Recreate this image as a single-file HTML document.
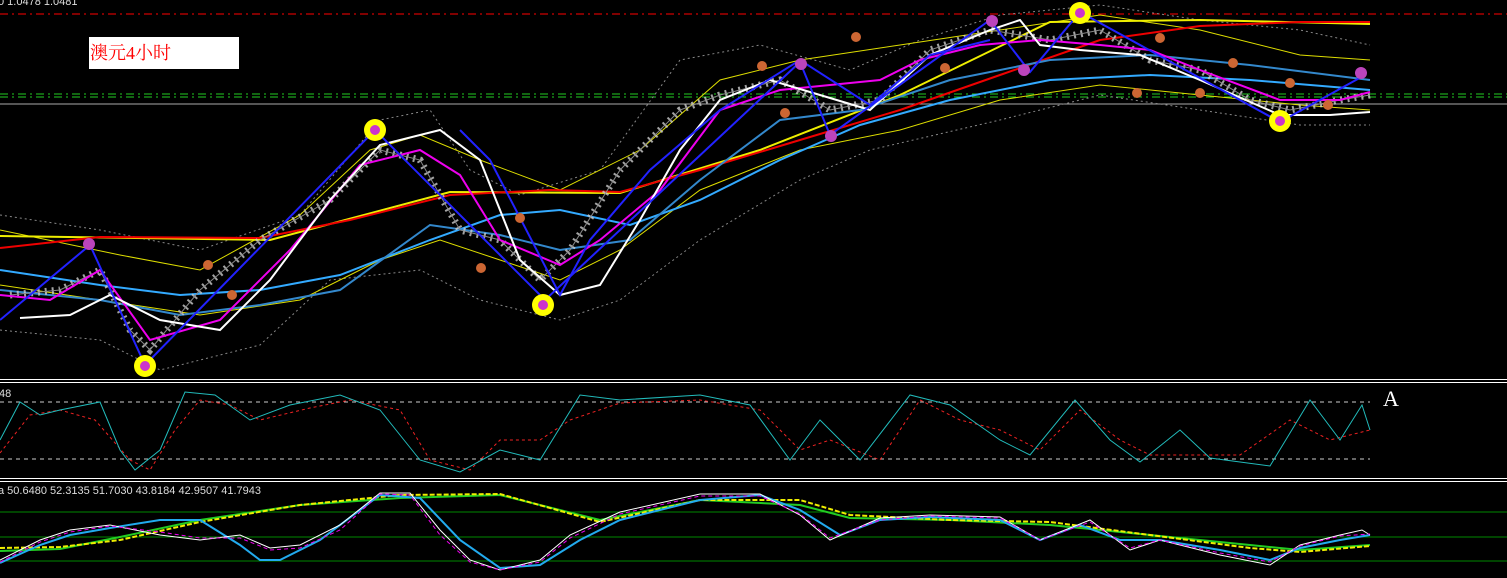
<!DOCTYPE html>
<html><head><meta charset="utf-8"><style>
html,body{margin:0;padding:0;background:#000;width:1507px;height:578px;overflow:hidden}
svg{display:block}
</style></head><body>
<svg width="1507" height="578" viewBox="0 0 1507 578" xmlns="http://www.w3.org/2000/svg" style="font-family:'Liberation Sans',sans-serif">
<rect width="1507" height="578" fill="#000"/>
<text x="-2" y="5" fill="#ddd" font-size="11">0 1.0478 1.0481</text>
<line x1="0" y1="14" x2="1507" y2="14" stroke="#f00" stroke-dasharray="8,4,2,4"/>
<line x1="0" y1="94" x2="1507" y2="94" stroke="#2c2" stroke-dasharray="8,4,2,4"/>
<line x1="0" y1="97" x2="1507" y2="97" stroke="#2c2" stroke-dasharray="8,4,2,4"/>
<line x1="0" y1="104" x2="1507" y2="104" stroke="#aaa"/>
<rect x="89" y="37" width="150" height="32" fill="#fff"/>
<text x="90" y="59" fill="#f00" style="font-size:18px;font-family:'Liberation Serif','Noto Serif CJK SC',serif">澳元4小时</text>
<!-- bands -->
<polyline fill="none" stroke="#888" stroke-dasharray="2,3" points="0,215 100,230 200,250 300,215 380,120 430,110 470,170 520,195 600,170 680,60 760,45 850,70 920,40 1000,15 1100,5 1200,20 1300,30 1370,45"/>
<polyline fill="none" stroke="#888" stroke-dasharray="2,3" points="0,330 100,340 160,370 260,345 330,280 420,270 480,300 560,320 620,300 700,240 800,180 870,150 1000,120 1100,95 1200,110 1300,125 1370,125"/>
<polyline fill="none" stroke="#dd0" points="0,285 100,300 200,315 300,300 380,260 440,240 500,260 560,280 620,250 700,190 800,150 900,130 1000,100 1100,85 1200,95 1300,105 1370,110"/>
<polyline fill="none" stroke="#dd0" points="0,230 120,255 200,270 300,215 370,150 420,135 480,160 560,190 640,150 720,80 800,60 900,45 1000,30 1100,15 1200,30 1300,55 1370,60"/>
<polyline fill="none" stroke="#ee0" stroke-width="2" points="0,236 270,240 450,192 620,193 760,150 900,95 1050,22 1200,20 1370,24"/>
<polyline fill="none" stroke="#e00" stroke-width="2" points="0,248 100,237 260,238 350,220 450,195 550,190 620,192 700,170 800,140 900,110 1000,75 1100,40 1200,26 1300,22 1370,22"/>
<polyline fill="none" stroke="#3af" stroke-width="2" points="0,270 100,285 180,295 260,290 340,275 430,240 500,215 560,210 630,225 700,200 780,160 860,125 950,100 1050,80 1150,75 1250,80 1370,90"/>
<polyline fill="none" stroke="#38c" stroke-width="2" points="0,290 100,300 180,315 260,305 340,290 430,225 500,235 560,250 630,240 700,180 780,120 860,110 950,80 1050,60 1150,55 1250,65 1370,80"/>
<!-- candles texture -->
<polyline fill="none" stroke="#ccc" stroke-width="7" stroke-dasharray="2,5" opacity="0.8" points="10,295 60,290 100,270 130,330 150,350 200,290 260,240 330,200 380,150 420,160 460,230 500,240 540,280 570,250 620,170 680,110 720,95 780,80 830,110 880,100 930,50 990,30 1050,40 1100,30 1150,60 1200,70 1250,100 1290,110 1340,100 1370,95"/>
<polyline fill="none" stroke="#888" points="10,295 60,290 100,270 130,330 150,350 200,290 260,240 330,200 380,150 420,160 460,230 500,240 540,280 570,250 620,170 680,110 720,95 780,80 830,110 880,100 930,50 990,30 1050,40 1100,30 1150,60 1200,70 1250,100 1290,110 1340,100 1370,95"/>
<polyline fill="none" stroke="#e0e" stroke-width="2" points="0,295 50,300 100,270 150,340 220,320 290,250 360,165 420,150 460,175 500,240 560,265 600,240 660,190 720,110 780,90 830,85 880,80 920,60 980,45 1040,40 1100,45 1150,50 1200,70 1280,100 1340,100 1370,92"/>
<polyline fill="none" stroke="#fff" stroke-width="2" points="20,318 70,315 110,295 160,320 220,330 270,280 330,200 380,145 440,130 480,160 520,260 560,295 600,285 640,220 680,150 720,100 770,80 820,95 870,110 930,55 990,30 1020,20 1040,45 1080,50 1140,55 1200,80 1280,115 1330,115 1370,112"/>
<polyline fill="none" stroke="#22f" stroke-width="2" points="0,320 90,245 145,365 375,130 545,300 800,62 830,135 990,20 1030,72 1080,12 1280,122 1365,75"/>
<polyline fill="none" stroke="#22f" stroke-width="2" points="460,130 490,160 560,295 590,240 650,170 720,110 800,60 870,105 930,55 990,40"/>
<g fill="#ff0"><circle cx="145" cy="366" r="11"/><circle cx="375" cy="130" r="11"/><circle cx="543" cy="305" r="11"/><circle cx="1080" cy="13" r="11"/><circle cx="1280" cy="121" r="11"/></g>
<g fill="#c3c"><circle cx="145" cy="366" r="5"/><circle cx="375" cy="130" r="5"/><circle cx="543" cy="305" r="5"/><circle cx="1080" cy="13" r="5"/><circle cx="1280" cy="121" r="5"/></g>
<g fill="#b4b"><circle cx="89" cy="244" r="6"/><circle cx="801" cy="64" r="6"/><circle cx="992" cy="21" r="6"/><circle cx="1361" cy="73" r="6"/><circle cx="1024" cy="70" r="6"/><circle cx="831" cy="136" r="6"/></g>
<g fill="#c63"><circle cx="208" cy="265" r="5"/><circle cx="232" cy="295" r="5"/><circle cx="520" cy="218" r="5"/><circle cx="481" cy="268" r="5"/><circle cx="856" cy="37" r="5"/><circle cx="762" cy="66" r="5"/><circle cx="945" cy="68" r="5"/><circle cx="1160" cy="38" r="5"/><circle cx="1137" cy="93" r="5"/><circle cx="1200" cy="93" r="5"/><circle cx="1233" cy="63" r="5"/><circle cx="1290" cy="83" r="5"/><circle cx="1328" cy="105" r="5"/><circle cx="785" cy="113" r="5"/></g>
<!-- separators -->
<line x1="0" y1="379.5" x2="1507" y2="379.5" stroke="#fff"/><line x1="0" y1="382.5" x2="1507" y2="382.5" stroke="#fff"/>
<line x1="0" y1="478.5" x2="1507" y2="478.5" stroke="#fff"/><line x1="0" y1="481.5" x2="1507" y2="481.5" stroke="#fff"/>
<text x="-1" y="397" fill="#ddd" font-size="11">48</text>
<text x="1383" y="406" fill="#fff" style="font-size:22px;font-family:'Liberation Serif',serif">A</text>
<line x1="0" y1="402" x2="1370" y2="402" stroke="#ccc" stroke-dasharray="4,4"/>
<line x1="0" y1="459" x2="1370" y2="459" stroke="#ccc" stroke-dasharray="4,4"/>
<polyline fill="none" stroke="#e22" stroke-dasharray="3,3" points="0,453 30,415 60,410 95,420 130,460 150,470 175,430 200,400 230,405 260,420 310,408 350,400 400,410 430,460 470,470 500,440 540,440 570,420 620,403 700,400 760,410 800,450 830,440 880,460 920,400 960,420 1000,430 1040,450 1080,410 1120,440 1150,455 1200,455 1240,455 1290,420 1330,440 1370,430"/>
<polyline fill="none" stroke="#2bb" points="0,440 20,402 40,415 60,410 100,402 120,450 135,470 160,450 185,392 215,395 250,420 290,405 340,395 380,410 420,460 460,472 500,450 540,460 580,395 620,400 700,395 750,405 790,460 820,420 860,460 910,395 950,405 1000,440 1030,455 1075,400 1110,440 1140,462 1180,430 1210,458 1270,466 1310,400 1340,440 1362,405 1370,430"/>
<text x="-2" y="494" fill="#ddd" font-size="11">a 50.6480 52.3135 51.7030 43.8184 42.9507 41.7943</text>
<line x1="0" y1="512" x2="1507" y2="512" stroke="#080"/>
<line x1="0" y1="537" x2="1507" y2="537" stroke="#080"/>
<line x1="0" y1="561" x2="1507" y2="561" stroke="#080"/>
<polyline fill="none" stroke="#2c2" stroke-width="2" points="0,551 60,549 120,537 200,520 300,505 400,498 500,495 600,520 700,500 800,505 850,518 950,520 1050,525 1150,535 1250,545 1300,550 1370,545"/>
<polyline fill="none" stroke="#ee0" stroke-dasharray="5,2" stroke-width="2" points="0,548 60,547 120,540 200,522 300,505 400,495 500,494 600,522 700,500 800,500 850,515 950,520 1050,522 1150,535 1250,548 1300,552 1370,546"/>
<polyline fill="none" stroke="#2ae" stroke-width="2" points="0,563 40,545 70,535 110,528 160,520 200,520 240,545 260,560 280,560 320,540 380,495 420,498 460,540 500,568 540,565 580,540 620,520 700,500 760,495 800,510 840,535 880,520 930,517 1000,520 1040,540 1080,525 1120,540 1160,540 1220,550 1270,560 1300,548 1340,540 1370,535"/>
<polyline fill="none" stroke="#fff" points="0,560 40,540 70,530 110,525 160,535 200,540 240,535 270,548 300,545 340,525 380,493 410,493 440,530 470,560 500,570 540,560 570,535 620,512 700,494 760,494 800,515 830,540 880,518 930,515 1000,517 1040,540 1090,520 1130,550 1160,540 1220,555 1270,565 1300,545 1340,535 1362,530 1370,535"/>
<polyline fill="none" stroke="#e0e" stroke-dasharray="4,3" points="0,562 40,542 70,532 110,526 160,532 200,538 240,538 270,550 300,548 340,530 380,494 410,495 440,535 470,562 500,570 540,562 570,538 620,514 700,496 760,496 800,514 830,538 880,520 930,516 1000,518 1040,540 1090,522 1130,548 1160,540 1220,553 1270,562 1300,546 1340,536 1370,534"/>
</svg>
</body></html>
